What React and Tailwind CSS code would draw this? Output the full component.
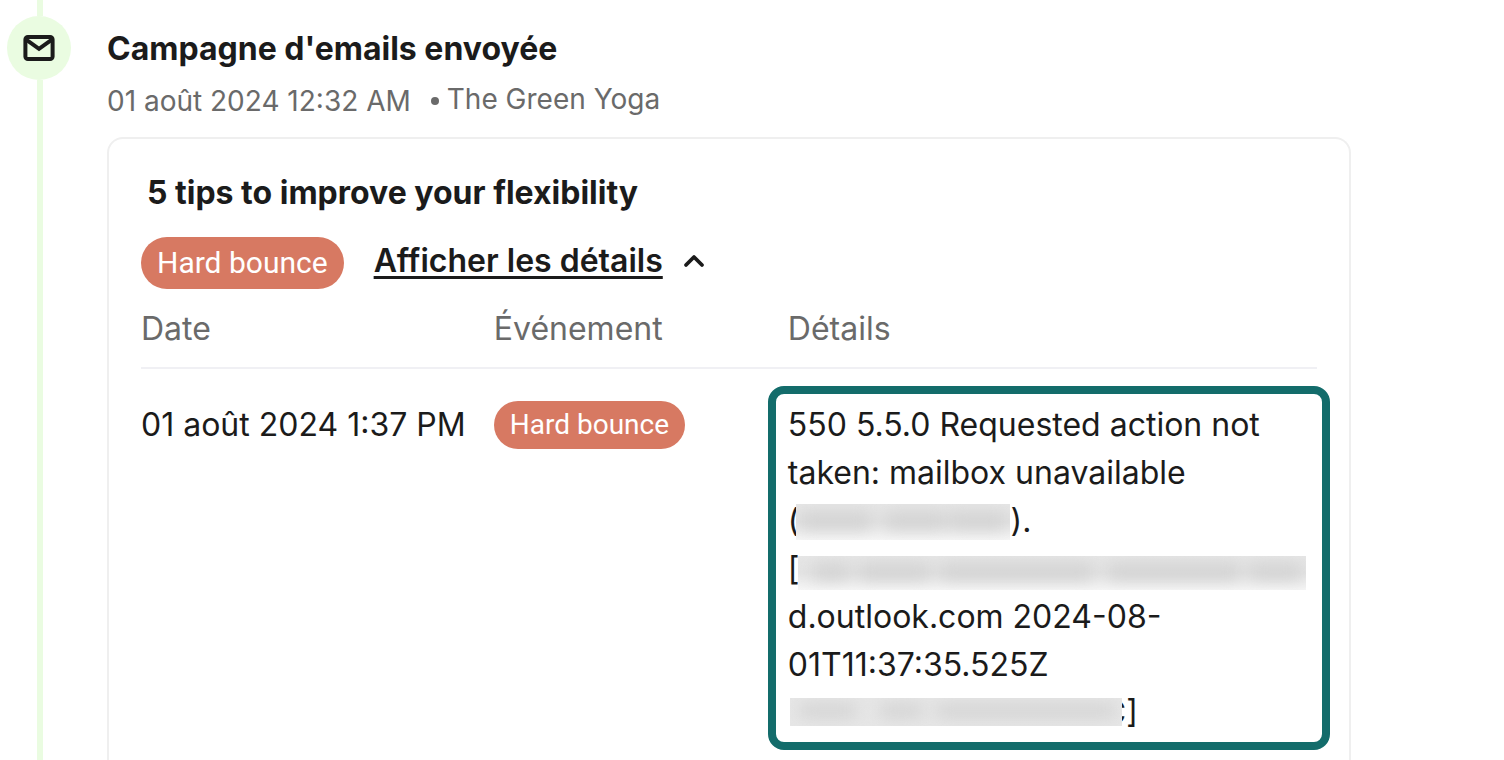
import React from "react";

function MailIcon() {
  return (
    <svg width="32" height="28" viewBox="0 0 32 28" fill="none" stroke="#1b1b1b" strokeWidth="4" strokeLinejoin="round" aria-hidden="true">
      <rect x="2.4" y="3" width="27.2" height="22" rx="2.5" />
      <path d="M2.8 5.4 L16 14.8 L29.2 5.4" strokeLinejoin="miter" />
    </svg>
  );
}

function ChevronUp() {
  return (
    <svg width="22" height="14" viewBox="0 0 22 14" fill="none" stroke="#1b1b1b" strokeWidth="3.8" strokeLinecap="round" strokeLinejoin="round" aria-hidden="true">
      <path d="M3 11 L11 3 L19 11" />
    </svg>
  );
}

function Redacted({ className, blobs }) {
  return (
    <span className={"relative inline-block overflow-hidden align-top bg-linear-to-b from-[#e6e6e6] " + className}>
      <svg className="block h-full w-full blur-[8px]" viewBox="0 0 100 30" preserveAspectRatio="none" aria-hidden="true">
        {blobs.map(([x, w], i) => (
          <rect key={i} x={x} y="7" width={w} height="14" fill="#d2d2d2" />
        ))}
      </svg>
    </span>
  );
}

export default function App() {
  return (
    <main className="flex min-h-screen bg-white font-[Inter,sans-serif] text-[#1b1b1b]">
      <div className="flex w-[78px] shrink-0 flex-col items-center">
        <div className="ml-0.5 h-4 w-1.5 bg-[#eafce1]" />
        <div className="flex size-16 items-center justify-center rounded-full bg-[#eafce1]">
          <MailIcon />
        </div>
        <div className="ml-0.5 w-1.5 flex-1 bg-[#eafce1]" />
      </div>

      <section className="mr-[153px] ml-[29px] flex flex-1 flex-col">
        <h1 className="mt-[25px] text-[32px] leading-12 font-bold">Campagne d'emails envoyée</h1>
        <p className="mt-1 flex h-12 items-center gap-2 text-[28px] text-[#6a6a6a]">
          <span className="mr-3">01 août 2024 12:32 AM</span>
          <span className="size-2 rounded-full bg-[#6a6a6a]" />
          <span className="pb-1">The Green Yoga</span>
        </p>

        <article className="mt-3 flex-1 rounded-t-2xl border-2 border-b-0 border-[#efefef] px-8 pt-[30px] pb-2.5">
          <h2 className="pl-1.5 text-[32px] leading-12 font-bold">5 tips to improve your flexibility</h2>
          <div className="mt-5 flex items-center">
            <span className="rounded-full bg-[#d77962] px-4 font-[Roboto,sans-serif] text-[30px] leading-[52px] text-white">Hard bounce</span>
            <button type="button" aria-expanded="true" className="mb-1 ml-[30px] flex items-center gap-5 text-[32px] leading-12 font-semibold">
              <span className="underline decoration-3 underline-offset-4">Afficher les détails</span>
              <ChevronUp />
            </button>
          </div>

          <table className="mt-4 w-full table-fixed border-collapse text-left text-[32px] leading-12">
            <colgroup>
              <col className="w-[30%]" />
              <col className="w-[25%]" />
              <col />
            </colgroup>
            <thead>
              <tr className="border-b-2 border-[#f0f0f4] text-[#6a6a6a]">
                <th className="pb-[14px] font-normal">Date</th>
                <th className="pb-[14px] font-normal">Événement</th>
                <th className="pb-[14px] font-normal">Détails</th>
              </tr>
            </thead>
            <tbody>
              <tr className="align-top">
                <td className="pt-8 whitespace-nowrap">01 août 2024 1:37 PM</td>
                <td className="pt-8">
                  <span className="inline-block rounded-full bg-[#d77962] px-4 align-top font-[Roboto,sans-serif] text-[28px] leading-12 text-white">Hard bounce</span>
                </td>
                <td className="pt-[17px]">
                  <div className="-mr-[13px] -ml-5 rounded-2xl border-8 border-[#136c6b] pt-[7px] pr-2 pb-[5px] pl-3">
                    <div>550 5.5.0 Requested action not</div>
                    <div>taken: mailbox unavailable</div>
                    <div className="h-12">
                      (<Redacted className="mt-[7px] -ml-[3px] h-9 w-[214px] via-[#e3e3e3] to-[#f6f6f6]" blobs={[[2, 33], [42, 28], [72, 26]]} />).
                    </div>
                    <div className="h-12 whitespace-nowrap">
                      [<Redacted className="mt-[11px] -ml-px h-[34px] w-[508px] via-[#e3e3e3] to-[#f6f6f6]" blobs={[[3, 7], [12, 14], [28, 30], [61, 26], [89, 10]]} />
                    </div>
                    <div>d.outlook.com 2024-08-</div>
                    <div>01T11:37:35.525Z</div>
                    <div className="h-12">
                      <Redacted className="mt-[9px] ml-0.5 h-7 w-[332px] to-[#e7e7e7]" blobs={[[3, 17], [27, 13], [44, 54]]} />
                      <span className="-ml-[19px]" aria-hidden="true">C</span>]
                    </div>
                  </div>
                </td>
              </tr>
            </tbody>
          </table>
        </article>
      </section>
    </main>
  );
}
